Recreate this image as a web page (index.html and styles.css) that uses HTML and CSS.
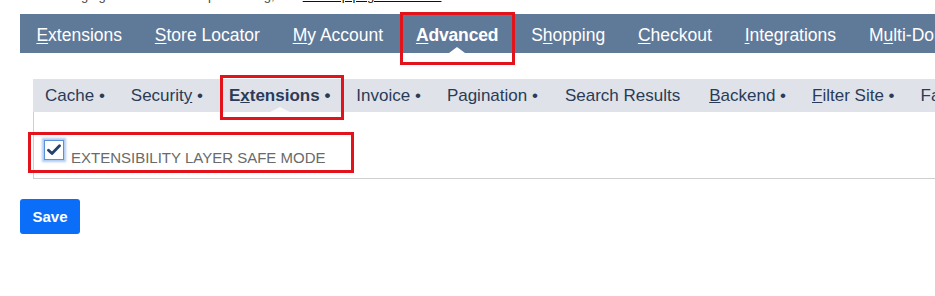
FILE: index.html
```html
<!DOCTYPE html>
<html>
<head>
<meta charset="utf-8">
<link rel="stylesheet" href="styles.css">
</head>
<body>
<div class="intro"><div class="intro-text">Changing these affects the processing, see <a href="#">the help page for details</a></div></div>

<nav class="main-nav">
  <a class="main-item" href="#"><u>E</u>xtensions</a>
  <a class="main-item" href="#"><u>S</u>tore Locator</a>
  <a class="main-item" href="#"><u>M</u>y Account</a>
  <a class="main-item active" href="#"><u>A</u>dvanced</a>
  <a class="main-item" href="#">S<u>h</u>opping</a>
  <a class="main-item" href="#"><u>C</u>heckout</a>
  <a class="main-item" href="#"><u>I</u>ntegrations</a>
  <a class="main-item" href="#">M<u>u</u>lti-Domain</a>
</nav>

<div class="sub-nav">
  <a class="sub-item" href="#">Cache <span class="dot">•</span></a>
  <a class="sub-item" href="#">Securit<u>y</u> <span class="dot">•</span></a>
  <a class="sub-item active" href="#">E<u>x</u>tensions <span class="dot">•</span></a>
  <a class="sub-item" href="#">Invoice <span class="dot">•</span></a>
  <a class="sub-item" href="#">Pagination <span class="dot">•</span></a>
  <a class="sub-item wide" href="#">Search Results</a>
  <a class="sub-item" href="#"><u>B</u>ackend <span class="dot">•</span></a>
  <a class="sub-item" href="#"><u>F</u>ilter Site <span class="dot">•</span></a>
  <a class="sub-item" href="#">Fa<u>v</u>orites</a>
</div>

<div class="panel">
  <label class="option">
    <span class="checkbox">
      <svg width="14" height="12" viewBox="0 0 14 12"><path d="M1.5 6.2 L5 9.5 L12.5 1.8" fill="none" stroke="#24406e" stroke-width="2.8" stroke-linecap="round" stroke-linejoin="round"/></svg>
    </span>
    <span class="option-label">EXTENSIBILITY LAYER SAFE MODE</span>
  </label>
</div>

<div class="actions">
  <button class="save-btn">Save</button>
</div>
</body>
</html>
```

FILE: styles.css
```css
html, body {
  margin: 0;
  padding: 0;
  background: #ffffff;
  font-family: "Liberation Sans", Arial, sans-serif;
  width: 935px;
  overflow: hidden;
}

.intro {
  height: 4px;
  overflow: hidden;
  padding-left: 50px;
}

.intro-text {
  margin-top: -12px;
  font-size: 13px;
  line-height: 15px;
  color: #444;
  white-space: nowrap;
}

.intro-text a {
  color: #111;
}

.main-nav {
  margin: 10px 0 0 20px;
  height: 39px;
  background: #5f7999;
  display: flex;
  align-items: center;
  white-space: nowrap;
}

.main-item {
  flex: none;
  position: relative;
  padding: 3px 16.4px 0;
  height: 36px;
  line-height: 36px;
  font-size: 17.5px;
  color: #ffffff;
  text-decoration: none;
}

.main-item u {
  text-decoration-thickness: 1px;
  text-underline-offset: 2px;
}

.main-item.active {
  font-weight: bold;
  letter-spacing: -0.15px;
}

.main-item.active::before {
  content: "";
  position: absolute;
  left: 50%;
  bottom: 0;
  margin-left: -8px;
  border-left: 8px solid transparent;
  border-right: 8px solid transparent;
  border-bottom: 6px solid #ffffff;
}

.main-item.active::after {
  content: "";
  position: absolute;
  left: 0;
  right: 0;
  top: -2px;
  bottom: -12px;
  border: 3px solid #e3131b;
}

.sub-nav {
  margin: 26px 0 0 33px;
  height: 33px;
  background: #dfe3e9;
  display: flex;
  align-items: center;
  white-space: nowrap;
}

.sub-item {
  flex: none;
  position: relative;
  padding: 0 13px;
  line-height: 33px;
  font-size: 17px;
  color: #2a3b58;
  text-decoration: none;
}

.sub-item:first-child {
  padding-left: 12px;
}

.sub-item.wide {
  padding-left: 14px;
  padding-right: 16px;
}

.sub-item.active {
  font-weight: bold;
}

.sub-item.active::before {
  content: "";
  position: absolute;
  left: 50%;
  bottom: 0;
  margin-left: -10px;
  border-left: 10px solid transparent;
  border-right: 10px solid transparent;
  border-bottom: 5px solid #f7f8fa;
}

.sub-item.active::after {
  content: "";
  position: absolute;
  left: 4px;
  right: -1px;
  top: -4px;
  bottom: -8px;
  border: 3px solid #e3131b;
}

.panel {
  margin-left: 33px;
  height: 66px;
  border-left: 1px solid #cfcfcf;
  border-bottom: 1px solid #cfcfcf;
}

.option {
  position: relative;
  display: inline-flex;
  align-items: flex-end;
  margin: 28px 0 0 10px;
  gap: 7px;
}

.option::after {
  content: "";
  position: absolute;
  left: -16px;
  right: -28px;
  top: -8px;
  bottom: -11px;
  border: 3px solid #e3131b;
}

.checkbox {
  width: 18px;
  height: 18px;
  border: 1px solid #5b8fd6;
  background: #ffffff;
  box-shadow: 0 0 2px 2px rgba(110, 160, 230, 0.55);
  display: flex;
  align-items: center;
  justify-content: center;
  margin-bottom: 2px;
}

.option-label {
  font-size: 15px;
  color: #6a6a6a;
  line-height: 15px;
  margin-bottom: -3px;
}

.actions {
  margin: 20px 0 0 20px;
}

.save-btn {
  width: 60px;
  height: 35px;
  border: none;
  border-radius: 3px;
  background: #0b6ef9;
  color: #ffffff;
  font-family: "Liberation Sans", Arial, sans-serif;
  font-weight: bold;
  font-size: 15px;
  padding: 0;
}
```
